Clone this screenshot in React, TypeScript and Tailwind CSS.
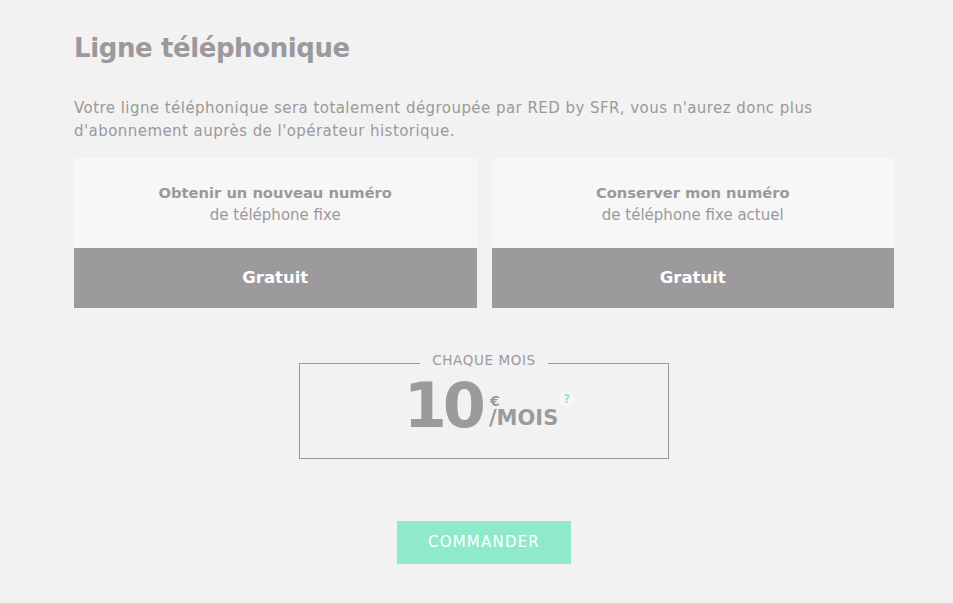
import React from "react";

const font = { fontFamily: '"DejaVu Sans", "Open Sans", sans-serif' };

function Option({ title, sub }: { title: string; sub: string }) {
  return (
    <div className="flex flex-col">
      <div className="h-[90px] bg-[#f7f7f7] flex flex-col items-center justify-center text-[15px] leading-[22px] text-[#9b999b] pt-[2px]">
        <div className="font-bold text-[14.7px]">{title}</div>
        <div>{sub}</div>
      </div>
      <div className="h-[60px] bg-[#9c9a9c] flex items-center justify-center text-white font-bold text-[16.5px]">
        Gratuit
      </div>
    </div>
  );
}

export default function App() {
  return (
    <div className="min-h-[603px] w-full bg-[#f2f2f2]" style={font}>
      <div className="pl-[74px] pt-[28px] w-[894px]">
        <h1 className="text-[26px] font-bold text-[#9b999b] leading-[40px] tracking-[-0.4px]">Ligne téléphonique</h1>
        <p className="mt-[29px] text-[15px] leading-[23px] text-[#9b999b] tracking-[0.45px]">
          Votre ligne téléphonique sera totalement dégroupée par RED by SFR, vous n'aurez donc plus
          <br />
          d'abonnement auprès de l'opérateur historique.
        </p>
        <div className="mt-[15px] grid grid-cols-2 gap-[15px]">
          <Option title="Obtenir un nouveau numéro" sub="de téléphone fixe" />
          <Option title="Conserver mon numéro" sub="de téléphone fixe actuel" />
        </div>
        <div className="flex justify-center mt-[47px]">
          <fieldset className="w-[370px] h-[104px] border border-[#9a9a9a] flex flex-col items-center">
            <legend className="mx-auto px-[12px] text-[13.5px] uppercase text-[#9b999b] leading-[16px] tracking-[0.6px] relative -top-[3px]">Chaque mois</legend>
            <div className="flex items-start mt-[4px] text-[#9c9a9c] pl-[10px]">
              <span className="text-[62px] font-bold leading-[62px] tracking-[-4px]">10</span>
              <div className="flex flex-col ml-[8px] mt-[19px]">
                <span className="text-[14px] font-bold leading-[14px]">€</span>
                <span className="text-[21px] font-bold leading-[20px] -ml-[1px]">/MOIS</span>
              </div>
              <span className="ml-[1px] mt-[17px] w-[15px] h-[15px] rounded-full bg-[#f8f8f8] text-[#8fe9cb] text-[12px] font-bold leading-[15px] text-center">?</span>
            </div>
          </fieldset>
        </div>
        <div className="flex justify-center mt-[62px]">
          <button className="w-[174px] h-[43px] bg-[#8fe9cb] text-white text-[15px] uppercase tracking-[1.2px]">
            Commander
          </button>
        </div>
      </div>
    </div>
  );
}
